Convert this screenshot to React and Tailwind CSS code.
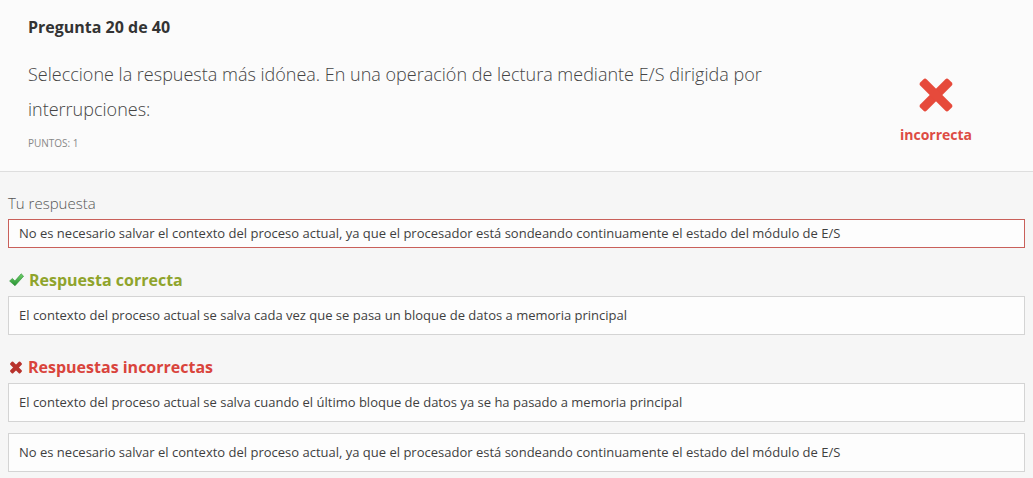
import React from "react";

function BigCross() {
  return (
    <svg width="34" height="34" viewBox="0 0 34 34">
      <g transform="translate(17 17) rotate(45)">
        <rect x="-4.5" y="-20" width="9" height="40" rx="2.5" fill="#e64a3b" />
        <rect x="-20" y="-4.5" width="40" height="9" rx="2.5" fill="#e64a3b" />
      </g>
    </svg>
  );
}

function SmallCross() {
  return (
    <svg width="14" height="14" viewBox="0 0 14 14">
      <g transform="translate(7 7.5) rotate(45)">
        <rect x="-2" y="-7" width="4" height="14" rx="1" fill="#b8322c" />
        <rect x="-7" y="-2" width="14" height="4" rx="1" fill="#b8322c" />
      </g>
    </svg>
  );
}

function Check() {
  return (
    <svg width="15" height="14" viewBox="0 0 15 14">
      <defs>
        <linearGradient id="chk" x1="0" y1="0" x2="0" y2="1">
          <stop offset="0" stopColor="#6fd06a" />
          <stop offset="1" stopColor="#279232" />
        </linearGradient>
      </defs>
      <path
        d="M0.6 8 L3.4 5.4 L5.9 8 L12.2 0.8 L14.6 3.2 L6 12.8 Z"
        fill="url(#chk)"
        stroke="#2a8f33"
        strokeWidth="0.6"
        strokeLinejoin="round"
      />
    </svg>
  );
}

function AnswerBox({ text, wrong }) {
  return (
    <div
      className={`border ${
        wrong ? "border-[#c9605a] py-[5px]" : "border-[#d4d4d4] py-[10px]"
      } bg-[#fdfdfd] pl-[10px] pr-3 text-[13px] leading-[17px] text-[#3f3f3f]`}
    >
      {text}
    </div>
  );
}

export default function App() {
  const mine =
    "No es necesario salvar el contexto del proceso actual, ya que el procesador está sondeando continuamente el estado del módulo de E/S";

  return (
    <div className="min-h-[478px] bg-[#f6f6f6] font-['Open_Sans',sans-serif]">
      <div className="flex border-b border-[#dedede] bg-[#fbfbfb]">
        <div className="flex-1 pl-[28px] pt-[15px] pb-[21px]">
          <h2 className="text-[16px] font-bold leading-6 text-[#333]">
            Pregunta 20 de 40
          </h2>
          <p className="mt-[18px] max-w-[800px] text-[18px] font-light leading-[35px] text-[#444]">
            Seleccione la respuesta más idónea. En una operación de lectura
            mediante E/S dirigida por interrupciones:
          </p>
          <p className="mt-[9px] text-[10px] leading-[14px] text-[#888]">
            PUNTOS: 1
          </p>
        </div>
        <div className="flex w-[192px] flex-col items-center pt-[78px] pr-[2px]">
          <BigCross />
          <span className="mt-[13px] text-[14px] font-bold leading-5 text-[#dd4b43]">
            incorrecta
          </span>
        </div>
      </div>

      <div className="px-2 pt-[21px] pb-[6px]">
        <div className="mb-[6px] text-[15px] font-light leading-5 text-[#555]">
          Tu respuesta
        </div>
        <AnswerBox text={mine} wrong />

        <div className="mt-[21px] mb-[5px] flex items-center gap-[5px] pl-[1px]">
          <Check />
          <span className="text-[16px] font-bold leading-[22px] text-[#8fa42c]">
            Respuesta correcta
          </span>
        </div>
        <AnswerBox text="El contexto del proceso actual se salva cada vez que se pasa un bloque de datos a memoria principal" />

        <div className="mt-[21px] mb-[5px] flex items-center gap-[5px] pl-[1px]">
          <SmallCross />
          <span className="text-[16px] font-bold leading-[22px] text-[#d9443c]">
            Respuestas incorrectas
          </span>
        </div>
        <div className="flex flex-col gap-[11px]">
          <AnswerBox text="El contexto del proceso actual se salva cuando el último bloque de datos ya se ha pasado a memoria principal" />
          <AnswerBox text={mine} />
        </div>
      </div>
    </div>
  );
}
